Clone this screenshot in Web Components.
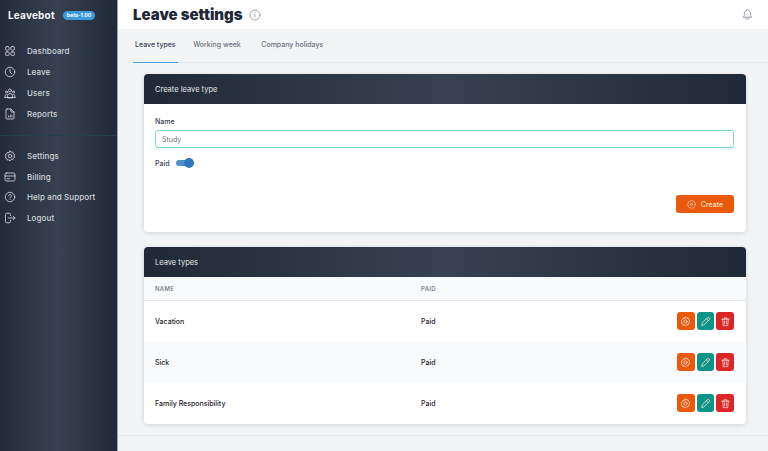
<!DOCTYPE html>
<html lang="en">
<head>
<meta charset="utf-8">
<title>Leave settings</title>
<style>
html, body { margin: 0; height: 100%; overflow: hidden; }
body { font-family: "Inter", "Liberation Sans", sans-serif; color: #1f2937; background: #f3f4f6; }
</style>
</head>
<body>
<lb-app>
  <lb-sidebar slot="side"></lb-sidebar>
  <lb-topbar slot="top" title="Leave settings"></lb-topbar>
  <lb-tabs slot="top"></lb-tabs>
  <lb-card heading="Create leave type"><lb-leave-form></lb-leave-form></lb-card>
  <lb-card heading="Leave types">
    <lb-types-table>
      <lb-type-row name="Vacation" paid="Paid"></lb-type-row>
      <lb-type-row name="Sick" paid="Paid" shaded></lb-type-row>
      <lb-type-row name="Family Responsibility" paid="Paid"></lb-type-row>
    </lb-types-table>
  </lb-card>
</lb-app>

<script>
const ICONS = {
  dashboard: '<rect x="3" y="3" width="7.5" height="7.5" rx="3"/><rect x="13.5" y="3" width="7.5" height="7.5" rx="3"/><rect x="3" y="13.5" width="7.5" height="7.5" rx="3"/><rect x="13.5" y="13.5" width="7.5" height="7.5" rx="3"/>',
  clock: '<circle cx="12" cy="12" r="9.5"/><path d="M12 6.5V12l3.5 3.5"/>',
  users: '<circle cx="12" cy="7" r="3"/><path d="M7 21v-3a5 5 0 0 1 10 0v3zM2 21v-3a3 3 0 0 1 4-3M22 21v-3a3 3 0 0 0-4-3M2 21h20"/><circle cx="5" cy="10" r="2"/><circle cx="19" cy="10" r="2"/>',
  report: '<path d="M6 2h8l6 6v12a2 2 0 0 1-2 2H6a2 2 0 0 1-2-2V4a2 2 0 0 1 2-2z"/><path d="M14 2v6h6M9 18v-2M12.5 18v-4M16 18v-3"/>',
  gear: '<path d="M12 2l2.2 2.4 3.2-.5 1 3 2.8 1.7-1.1 3 1.1 3-2.8 1.7-1 3-3.2-.5L12 22l-2.2-2.4-3.2.5-1-3-2.8-1.7 1.1-3-1.1-3 2.8-1.7 1-3 3.2.5z"/><circle cx="12" cy="12" r="3.5"/>',
  card: '<rect x="2" y="4" width="20" height="16" rx="3.5"/><path d="M2 10h20M6 15.5h5"/>',
  help: '<circle cx="12" cy="12" r="9.5"/><path d="M9.3 9.5a2.7 2.7 0 1 1 4.1 2.3c-.9.5-1.4 1.1-1.4 2.2M12 17.2v.01"/>',
  logout: '<path d="M13 7.5V5a2.5 2.5 0 0 0-2.5-2.5h-5A2.5 2.5 0 0 0 3 5v14a2.5 2.5 0 0 0 2.5 2.5h5A2.5 2.5 0 0 0 13 19v-2.5M9 12h13M18.500 8.500L22 12l-3.500 3.500"/>',
  info: '<circle cx="12" cy="12" r="10"/><path d="M12 11v5.500M12 7.500v.01"/>',
  bell: '<path d="M10 4.500a2 2 0 1 1 4 0 7 7 0 0 1 4 6.500v3a4 4 0 0 0 2 3H4a4 4 0 0 0 2-3v-3a7 7 0 0 1 4-6.500M9 17v1a3 3 0 0 0 6 0v-1"/>',
  plus: '<circle cx="12" cy="12" r="10"/><circle cx="12" cy="12" r="3"/>',
  pencil: '<path d="M4 20l1-5L16 4a2.100 2.100 0 0 1 4 4L9 19zM14 6l4 4"/>',
  trash: '<path d="M4 7h16M9 7V4h6v3M6 7l1 14h10l1-14M10 11v6M14 11v6"/>'
};
const icon = (name, size, width) => `<svg width="${size}" height="${size}" viewBox="0 0 24 24" fill="none" stroke="currentColor" stroke-width="${width}" stroke-linecap="round" stroke-linejoin="round">${ICONS[name]}</svg>`;

class LbApp extends HTMLElement {
  constructor() {
    super();
    this.attachShadow({ mode: "open" }).innerHTML = `<style>
      :host { display: flex; height: 451px; width: 768px; overflow: hidden; }
      main { flex: 1; min-width: 0; display: flex; flex-direction: column; }
      .cards { display: flex; flex-direction: column; gap: 15px; padding: 11px 22px 11px 26px; border-bottom: 1px solid #e5e7eb; }
    </style>
    <slot name="side"></slot>
    <main><slot name="top"></slot><div class="cards"><slot></slot></div></main>`;
  }
}

class LbNavItem extends HTMLElement {
  constructor() {
    super();
    this.attachShadow({ mode: "open" }).innerHTML = `<style>
      :host { display: flex; align-items: center; gap: 11px; height: 20.8px; padding-left: 4px; color: #d1d5db; font-size: 8px; font-weight: 500; letter-spacing: .1px; }
      svg { flex: none; display: block; }
    </style>${icon(this.getAttribute("icon"), 12, 1.7)}<span><slot></slot></span>`;
  }
}

class LbSidebar extends HTMLElement {
  constructor() {
    super();
    this.attachShadow({ mode: "open" }).innerHTML = `<style>
      :host { display: flex; flex-direction: column; flex: none; box-sizing: border-box; width: 118px; height: 451px; background: linear-gradient(90deg, #232c3b 0%, #374151 50%, #1f2937 100%); border-right: 1px solid #9ca3af; }
      .brand { display: flex; align-items: center; gap: 8px; height: 30px; padding-left: 8px; color: #f3f4f6; font-size: 10px; font-weight: 700; letter-spacing: .2px; }
      .beta { background: #3b9bdc; color: #fff; border-radius: 6px; font-size: 5.2px; font-weight: 700; padding: 1.5px 4px; letter-spacing: 0; }
      nav { display: flex; flex-direction: column; }
      .first { padding-top: 11px; padding-bottom: 10.5px; border-bottom: 1px solid #263f4d; }
      .second { padding-top: 9.7px; }
    </style>
    <div class="brand">Leavebot <span class="beta">beta-1.00</span></div>
    <nav class="first">
      <lb-nav-item icon="dashboard">Dashboard</lb-nav-item>
      <lb-nav-item icon="clock">Leave</lb-nav-item>
      <lb-nav-item icon="users">Users</lb-nav-item>
      <lb-nav-item icon="report">Reports</lb-nav-item>
    </nav>
    <nav class="second">
      <lb-nav-item icon="gear">Settings</lb-nav-item>
      <lb-nav-item icon="card">Billing</lb-nav-item>
      <lb-nav-item icon="help">Help and Support</lb-nav-item>
      <lb-nav-item icon="logout">Logout</lb-nav-item>
    </nav>`;
  }
}

class LbTopbar extends HTMLElement {
  constructor() {
    super();
    this.attachShadow({ mode: "open" }).innerHTML = `<style>
      :host { display: flex; align-items: center; justify-content: space-between; height: 29px; background: #fff; padding: 0 14px 0 15px; }
      .title { display: flex; align-items: center; gap: 6px; }
      h1 { margin: 0; font-size: 15px; font-weight: 900; color: #1f2937; letter-spacing: 0; }
      svg { display: block; color: #8b93a1; }
    </style>
    <div class="title"><h1>${this.getAttribute("title")}</h1>${icon("info", 12, 1.6)}</div>
    ${icon("bell", 13, 1.6)}`;
  }
}

class LbTabs extends HTMLElement {
  constructor() {
    super();
    this.attachShadow({ mode: "open" }).innerHTML = `<style>
      :host { display: flex; height: 33px; margin-left: 15px; border-bottom: 1px solid #e5e7eb; font-size: 7px; font-weight: 500; color: #6b7280; gap: 13.5px; }
      a { display: flex; align-items: center; padding: 0 2px 3px; height: 33px; box-sizing: border-box; }
      a:last-child { margin-left: 3px; }
      .on { color: #374151; border-bottom: 1px solid #4fa3dc; margin-bottom: -1px; height: 34px; }
    </style>
    <a class="on">Leave types</a><a>Working week</a><a>Company holidays</a>`;
  }
}

class LbCard extends HTMLElement {
  constructor() {
    super();
    this.attachShadow({ mode: "open" }).innerHTML = `<style>
      :host { display: block; background: #fff; border-radius: 4px; overflow: hidden; box-shadow: 0 1px 5px rgba(0,0,0,.14); }
      header { display: flex; align-items: center; height: 30px; padding: 0 11px; background: linear-gradient(90deg, #1f2937 0%, #374151 50%, #1f2937 100%); color: #e5e7eb; font-size: 7.5px; font-weight: 400; }
    </style>
    <header>${this.getAttribute("heading")}</header><slot></slot>`;
  }
}

class LbLeaveForm extends HTMLElement {
  constructor() {
    super();
    this.attachShadow({ mode: "open" }).innerHTML = `<style>
      :host { display: flex; flex-direction: column; height: 128px; box-sizing: border-box; padding: 13px 12px 19px 11px; font-size: 7px; font-weight: 500; color: #374151; }
      .field { height: 18px; box-sizing: border-box; margin-top: 4px; border: 1px solid #7fd8cc; border-radius: 3px; padding-left: 6px; display: flex; align-items: center; color: #6b7280; font-weight: 400; }
      .paid { display: flex; align-items: center; gap: 6px; margin-top: 10px; height: 10px; }
      .toggle { position: relative; width: 16px; height: 6px; border-radius: 3px; background: #4f8fce; }
      .toggle::after { content: ""; position: absolute; right: -2px; top: -2px; width: 10px; height: 10px; border-radius: 50%; background: #2f78bd; }
      .actions { margin-top: auto; display: flex; justify-content: flex-end; }
      button { display: flex; align-items: center; justify-content: center; gap: 5px; width: 58px; height: 18px; padding: 0; border: 0; border-radius: 3px; background: #ea580c; color: #fde3d3; font: inherit; font-size: 7px; }
      svg { display: block; }
    </style>
    <label>Name</label>
    <div class="field">Study</div>
    <div class="paid">Paid <span class="toggle"></span></div>
    <div class="actions"><button>${icon("plus", 9, 1.7)}Create</button></div>`;
  }
}

class LbTypesTable extends HTMLElement {
  constructor() {
    super();
    this.attachShadow({ mode: "open" }).innerHTML = `<style>
      :host { display: block; }
      .head { display: grid; grid-template-columns: 266px 1fr; align-items: center; height: 22.5px; padding-left: 11px; background: #f9fafb; border-bottom: 1px solid #e5e7eb; color: #6b7280; font-size: 6px; font-weight: 500; letter-spacing: .3px; }
      span { padding-top: 1px; }
    </style>
    <div class="head"><span>NAME</span><span>PAID</span></div><slot></slot>`;
  }
}

class LbIconButton extends HTMLElement {
  constructor() {
    super();
    this.attachShadow({ mode: "open" }).innerHTML = `<style>
      :host { display: flex; align-items: center; justify-content: center; width: 17.7px; height: 18px; border-radius: 3px; background: ${this.getAttribute("color")}; color: #fde8e0; }
      svg { display: block; }
    </style>${icon(this.getAttribute("icon"), 11, 1.7)}`;
  }
}

class LbTypeRow extends HTMLElement {
  constructor() {
    super();
    this.attachShadow({ mode: "open" }).innerHTML = `<style>
      :host { display: grid; grid-template-columns: 266px 1fr auto; align-items: center; height: 41px; padding: 0 12px 0 11px; font-size: 7px; font-weight: 500; color: #1f2328; }
      :host([shaded]) { background: #f9fafb; }
      .actions { display: flex; gap: 2px; }
    </style>
    <span>${this.getAttribute("name")}</span><span>${this.getAttribute("paid")}</span>
    <div class="actions">
      <lb-icon-button icon="gear" color="#ea580c"></lb-icon-button>
      <lb-icon-button icon="pencil" color="#0d9488"></lb-icon-button>
      <lb-icon-button icon="trash" color="#dc2626"></lb-icon-button>
    </div>`;
  }
}

customElements.define("lb-nav-item", LbNavItem);
customElements.define("lb-icon-button", LbIconButton);
customElements.define("lb-app", LbApp);
customElements.define("lb-sidebar", LbSidebar);
customElements.define("lb-topbar", LbTopbar);
customElements.define("lb-tabs", LbTabs);
customElements.define("lb-card", LbCard);
customElements.define("lb-leave-form", LbLeaveForm);
customElements.define("lb-types-table", LbTypesTable);
customElements.define("lb-type-row", LbTypeRow);
</script>
</body>
</html>
